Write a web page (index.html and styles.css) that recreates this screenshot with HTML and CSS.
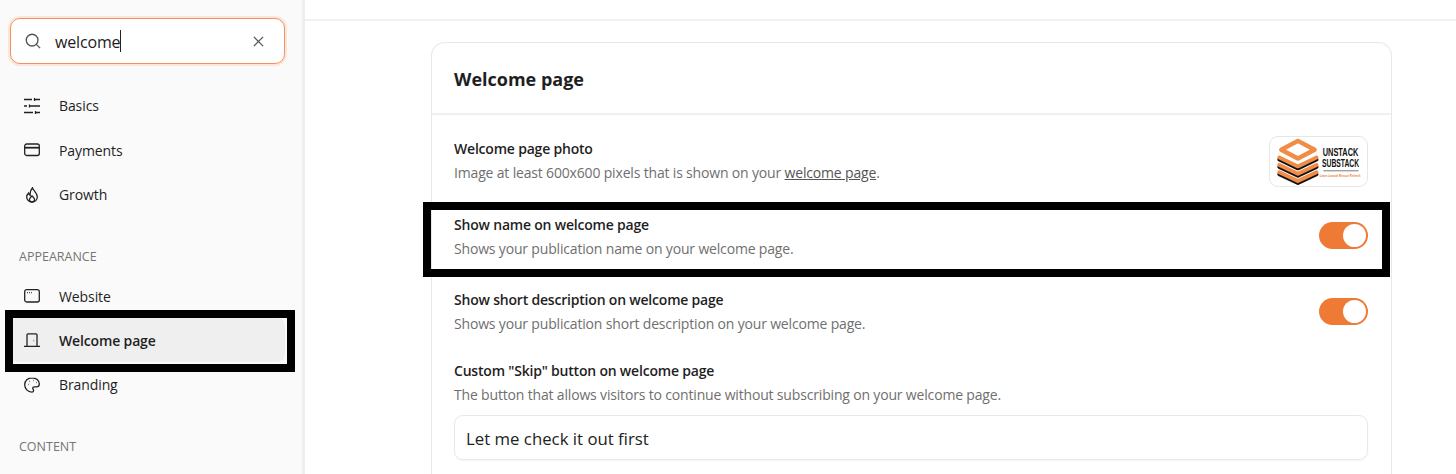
FILE: index.html
```html
<!DOCTYPE html>
<html lang="en">
<head>
<meta charset="utf-8">
<title>Welcome page settings</title>
<link rel="stylesheet" href="styles.css">
</head>
<body>
<div class="app">
  <aside class="sidebar">
    <div class="search">
      <svg class="search-icon" viewBox="0 0 18 18" width="16" height="16"><circle cx="8" cy="8" r="6.6"/><path d="M12.800 12.800 17 17"/></svg>
      <span class="search-text">welcome</span><span class="caret"></span>
      <svg class="clear-icon" viewBox="0 0 12 12" width="11" height="11"><path d="M1 1 11 11M11 1 1 11"/></svg>
    </div>
    <nav class="nav nav-first">
      <a class="nav-item"><svg class="icon" viewBox="0 0 16 16"><path d="M0 1.500h8M11 1.500h5M10.500 0v3M0 8h3M6 8h10M5.500 6.500v3M0 14.500h9M12 14.500h4M11.500 13v3"/></svg><span>Basics</span></a>
      <a class="nav-item"><svg class="icon" viewBox="0 0 16 14"><rect x=".7" y="1" width="14.600" height="11.500" rx="2"/><path d="M.7 4.700h14.600" stroke-width="1.800"/></svg><span>Payments</span></a>
      <a class="nav-item"><svg class="icon" viewBox="0 0 16 16"><path d="M8.500.8c.6 2.800 4.800 5 4.800 9 0 3-2.300 5.200-5.300 5.200s-5.300-2.100-5.300-5c0-1.700.8-3 1.900-4 .2 1.300.8 2 1.600 2.400C5.800 5.500 6.800 2.700 8.500.8Z"/><path d="M8 15c-1.600 0-2.600-1.100-2.600-2.400 0-1.400 1.300-2.200 2.600-3.800 1.300 1.600 2.600 2.400 2.600 3.800C10.600 13.900 9.600 15 8 15Z"/></svg><span>Growth</span></a>
    </nav>
    <div class="section-label section-appearance">APPEARANCE</div>
    <nav class="nav">
      <a class="nav-item"><svg class="icon" viewBox="0 0 16 14"><rect x=".7" y=".7" width="14.600" height="12.300" rx="2"/><path d="M3 3.700h.8M5 3.700h.8M7 3.700h.8"/></svg><span>Website</span></a>
      <a class="nav-item active"><svg class="icon" viewBox="0 0 16 14"><path d="M0 13.300h16M3 13.300V1.800a1 1 0 0 1 1-1h8a1 1 0 0 1 1 1v11.500M9.600 7.500h.5" /></svg><span>Welcome page</span></a>
      <a class="nav-item"><svg class="icon" viewBox="0 0 16 16"><path d="M8 .8C3.800.8.700 3.800.7 7.700c0 3.900 3.200 7.500 7.100 7.500 1.300 0 1.800-.8 1.800-1.600 0-1.200-.9-1.500-.9-2.400 0-.8.700-1.300 1.500-1.300h2.200c1.800 0 2.900-1.200 2.900-2.900C15.300 3.500 12.200.8 8 .8Z"/><path d="M4 7.500h.5M5.500 4.500h.5M9 3.500h.5M12 5.500h.5" stroke-width="1.500"/></svg><span>Branding</span></a>
    </nav>
    <div class="section-label section-content">CONTENT</div>
    <div class="annot annot-nav"></div>
  </aside>
  <main class="main">
    <div class="topbar"></div>
    <section class="card">
      <h1 class="card-title">Welcome page</h1>
      <div class="card-body">
        <div class="row row-photo">
          <div>
            <div class="row-title">Welcome page photo</div>
            <div class="row-desc">Image at least 600x600 pixels that is shown on your <u>welcome page</u>.</div>
          </div>
          <div class="logo">
            <svg viewBox="0 0 98 50" width="97" height="49">
              <g fill="none" stroke-linejoin="round" stroke-linecap="round" stroke-width="4">
                <path d="M9 38 28 47 47 38" stroke="#111"/>
                <path d="M9 36 28 45 47 36" stroke="#f08c46"/>
                <path d="M9 30.500 28 39.500 47 30.500" stroke="#111"/>
                <path d="M9 28.500 28 37.500 47 28.500" stroke="#f08c46"/>
                <path d="M9 23 28 32 47 23" stroke="#111"/>
                <path d="M9 21 28 30 47 21" stroke="#f08c46"/>
                <path d="M28 4 45 13 28 22 11 13Z" stroke="#f08c46" stroke-width="4.500"/>
              </g>
              <text class="logo-word" transform="translate(71.500 19) scale(.72 1)">UNSTACK</text>
              <text class="logo-word" transform="translate(71.500 31) scale(.66 1)">SUBSTACK</text>
              <path d="M54 34.500H90" stroke="#777" stroke-width="1"/>
              <text class="logo-tag" x="71" y="41">Learn Launch Rescue Refresh</text>
            </svg>
          </div>
        </div>
        <div class="row row-name">
          <div>
            <div class="row-title">Show name on welcome page</div>
            <div class="row-desc">Shows your publication name on your welcome page.</div>
          </div>
          <span class="toggle"><span class="knob"></span></span>
        </div>
        <div class="row row-short">
          <div>
            <div class="row-title">Show short description on welcome page</div>
            <div class="row-desc">Shows your publication short description on your welcome page.</div>
          </div>
          <span class="toggle"><span class="knob"></span></span>
        </div>
        <div class="field">
          <div class="row-title">Custom "Skip" button on welcome page</div>
          <div class="row-desc">The button that allows visitors to continue without subscribing on your welcome page.</div>
          <div class="input">Let me check it out first</div>
        </div>
      </div>
    </section>
    <div class="annot annot-row"></div>
  </main>
</div>
</body>
</html>
```
FILE: styles.css
```css
* { box-sizing: border-box; }
html, body { margin: 0; height: 474px; overflow: hidden; background: #fff; }
body { font-family: "Open Sans", "Noto Sans", sans-serif; color: #1f1f1f; }
.app { display: flex; height: 474px; position: relative; overflow: hidden; }

.sidebar { width: 305px; flex: none; background: #fafafa; border-right: 3px solid #eeeeee; padding: 18px 0 0 10px; }
.search { width: 275px; height: 46px; background: #fff; border: 1.5px solid #f2935c; border-radius: 10px; box-shadow: 0 0 0 2px #fbe6da; display: flex; align-items: center; padding-left: 14px; }
.search-icon { fill: none; stroke: #555; stroke-width: 1.500; margin-right: 14px; }
.search-text { font-size: 16px; letter-spacing: -.15px; color: #222; padding-top: 2px; }
.caret { width: 1px; height: 22px; background: #222; }
.clear-icon { stroke: #555; stroke-width: 1.400; margin-left: auto; margin-right: 20px; }

.nav { display: flex; flex-direction: column; width: 275px; }
.nav-first { margin-top: 19.800px; }
.nav-item { height: 44.300px; display: flex; align-items: center; padding-left: 14px; border-radius: 8px; font-size: 14px; font-weight: 500; letter-spacing: -.1px; color: #1f1f1f; }
.nav-item span { margin-left: 19px; }
.nav-item.active { background: #efefef; font-weight: 600; letter-spacing: -.15px; }
.icon { width: 16px; height: 16px; fill: none; stroke: #222; stroke-width: 1.300; flex: none; }
.section-label { font-size: 12.500px; color: #757575; padding-left: 9px; line-height: 16px; }
.section-appearance { margin-top: 32.700px; margin-bottom: 8.500px; }
.section-content { margin-top: 32px; }

.main { flex: 1; position: relative; }
.topbar { height: 21px; border-bottom: 2px solid #f1f1f1; }
.card { width: 961px; height: 432px; margin: 21px 0 0 126px; border: 1px solid #e8e8e8; border-bottom: 0; border-radius: 14px 14px 0 0; }
.card-title { margin: 0; height: 72px; font-size: 18px; font-weight: 700; line-height: 72px; padding-left: 22px; color: #1f1f1f; border-bottom: 2px solid #f0f0f0; }
.card-body { padding: 0 23px 0 22px; }
.row { display: flex; justify-content: space-between; align-items: center; }
.row-photo { height: 84px; padding-top: 8px; }
.row-name { height: 75px; }
.row-short { height: 76px; }
.row-title { font-size: 14px; font-weight: 600; letter-spacing: -.2px; color: #1f1f1f; line-height: 20px; }
.row-desc { font-size: 14px; letter-spacing: -.17px; color: #6f6f6f; line-height: 20px; margin-top: 4px; }
.row-desc u { color: #555; }
.logo { width: 99px; height: 51px; border: 1px solid #e6e6e6; border-radius: 9px; background: #fff; }
.logo svg { display: block; }
.logo-word { font-family: "Liberation Sans", sans-serif; font-size: 10.500px; font-weight: 700; text-anchor: middle; fill: #111; }
.logo-tag { font-family: "Liberation Sans", sans-serif; font-size: 2.900px; font-weight: 700; text-anchor: middle; fill: #ee7b34; }
.toggle { width: 49px; height: 27px; margin-bottom: 2px; border-radius: 14px; background: #ee7a35; display: flex; align-items: center; justify-content: flex-end; padding-right: 2px; }
.knob { width: 23px; height: 23px; border-radius: 50%; background: #fff; }
.field { padding-top: 11px; }
.input { height: 45px; margin-top: 10px; border: 1px solid #e8e8e8; border-radius: 9px; font-size: 16.800px; line-height: 45px; padding-left: 11px; color: #222; box-shadow: 0 1px 2px rgba(0,0,0,.05); }

.annot { position: absolute; border: 8px solid #000; pointer-events: none; }
.annot-nav { left: 5px; top: 310px; width: 290px; height: 62px; }
.annot-row { left: 118px; top: 202px; width: 967px; height: 75px; }
```
